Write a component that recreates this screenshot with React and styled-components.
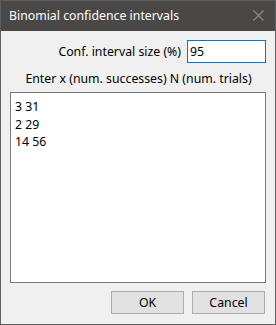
import React from "react";
import styled, { createGlobalStyle } from "styled-components";

const GlobalStyle = createGlobalStyle`
  html, body {
    margin: 0;
    padding: 0;
    background: #f0f0f0;
  }
  * {
    box-sizing: border-box;
  }
`;

const Window = styled.div`
  width: 276px;
  height: 325px;
  display: flex;
  flex-direction: column;
  border: 1px solid #5e5e5e;
  background: #f0f0f0;
  font-family: "Noto Sans", "Open Sans", sans-serif;
  font-size: 12.3px;
  color: #000;
`;

const TitleBar = styled.div`
  height: 30px;
  flex: none;
  display: flex;
  align-items: center;
  justify-content: space-between;
  padding: 0 8px 1px 8px;
  background: #4a4846;
  color: #fff;
`;

const Title = styled.span`
  line-height: 16px;
`;

const CloseIcon = styled.svg`
  width: 11px;
  height: 11px;
  margin-right: 3px;
`;

const Body = styled.div`
  flex: 1;
  display: flex;
  flex-direction: column;
  padding: 9px 9px 10px 9px;
`;

const FieldRow = styled.div`
  display: flex;
  justify-content: flex-end;
  align-items: center;
  gap: 6px;
`;

const Label = styled.label`
  line-height: 16px;
  white-space: nowrap;
`;

const TextInput = styled.input`
  width: 79px;
  height: 23px;
  border: 1px solid #0078d7;
  background: #fff;
  padding: 0 2px;
  font-family: inherit;
  font-size: inherit;
  color: #000;
  outline: none;
`;

const Caption = styled.div`
  margin-top: 8px;
  text-align: center;
  line-height: 16px;
  padding-left: 1px;
`;

const DataArea = styled.textarea`
  margin: 5px 0 0 0;
  width: 256px;
  height: 191px;
  border: 1px solid #7a7a7a;
  background: #fff;
  padding: 5px 4px;
  font-family: inherit;
  font-size: inherit;
  line-height: 17.5px;
  color: #000;
  resize: none;
  outline: none;
  overflow: hidden;
`;

const ButtonRow = styled.div`
  margin-top: 8px;
  display: flex;
  justify-content: flex-end;
  gap: 8px;
  padding-right: 1px;
`;

const Button = styled.button`
  width: 73px;
  height: 23px;
  border: 1px solid #adadad;
  background: #e1e1e1;
  font-family: inherit;
  font-size: inherit;
  color: #000;
  padding: 0;
`;

export default function App() {
  return (
    <>
      <GlobalStyle />
      <Window>
        <TitleBar>
          <Title>Binomial confidence intervals</Title>
          <CloseIcon viewBox="0 0 11 11">
            <path d="M0.5 0.5 L10.5 10.5 M10.5 0.5 L0.5 10.5" stroke="#8a8a8a" strokeWidth="1.1" fill="none" />
          </CloseIcon>
        </TitleBar>
        <Body>
          <FieldRow>
            <Label htmlFor="conf">Conf. interval size (%)</Label>
            <TextInput id="conf" defaultValue="95" readOnly />
          </FieldRow>
          <Caption>Enter x (num. successes) N (num. trials)</Caption>
          <DataArea readOnly defaultValue={"3 31\n2 29\n14 56"} />
          <ButtonRow>
            <Button>OK</Button>
            <Button>Cancel</Button>
          </ButtonRow>
        </Body>
      </Window>
    </>
  );
}
